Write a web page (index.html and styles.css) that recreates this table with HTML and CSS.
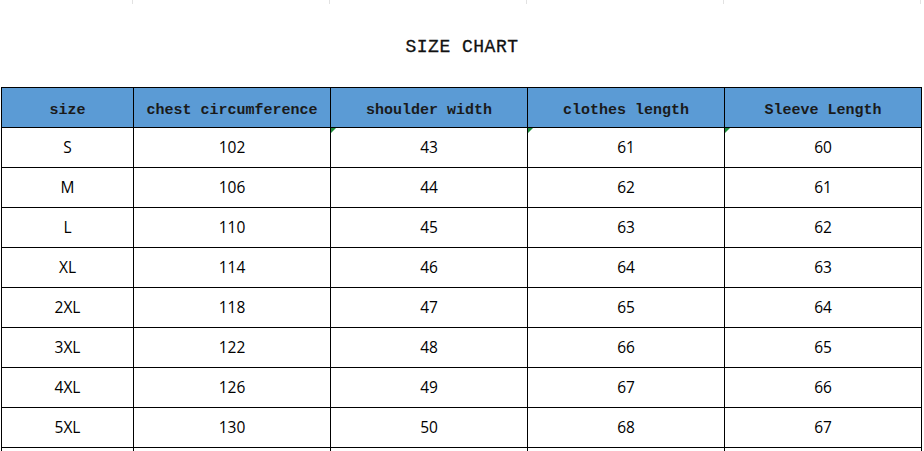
FILE: index.html
```html
<!DOCTYPE html>
<html lang="en">
<head>
<meta charset="utf-8">
<title>Size Chart</title>
<link rel="stylesheet" href="styles.css">
</head>
<body>
<div class="ticks"><span></span><span></span><span></span><span></span><span></span></div>
<h1 class="title">SIZE CHART</h1>
<table class="chart">
  <colgroup>
    <col class="c1"><col class="c2"><col class="c2"><col class="c2"><col class="c2">
  </colgroup>
  <thead>
    <tr><th>size</th><th>chest circumference</th><th>shoulder width</th><th>clothes length</th><th>Sleeve Length</th></tr>
  </thead>
  <tbody>
    <tr><td>S</td><td>102</td><td class="flag">43</td><td class="flag">61</td><td class="flag">60</td></tr>
    <tr><td>M</td><td>106</td><td>44</td><td>62</td><td>61</td></tr>
    <tr><td>L</td><td>110</td><td>45</td><td>63</td><td>62</td></tr>
    <tr><td>XL</td><td>114</td><td>46</td><td>64</td><td>63</td></tr>
    <tr><td>2XL</td><td>118</td><td>47</td><td>65</td><td>64</td></tr>
    <tr><td>3XL</td><td>122</td><td>48</td><td>66</td><td>65</td></tr>
    <tr><td>4XL</td><td>126</td><td>49</td><td>67</td><td>66</td></tr>
    <tr><td>5XL</td><td>130</td><td>50</td><td>68</td><td>67</td></tr>
    <tr><td></td><td></td><td></td><td></td><td></td></tr>
  </tbody>
</table>
</body>
</html>
```
FILE: styles.css
```css
html { overflow: hidden; background: #fff; }
body {
  margin: 0;
  width: 924px;
  font-family: "Open Sans", "Noto Sans", sans-serif;
  color: #000;
}
.ticks {
  display: grid;
  grid-template-columns: 133px 197px 197px 197px 197px;
  height: 4px;
}
.ticks span { border-right: 1px solid #e2e2e2; }
.title {
  margin: 0;
  height: 83px;
  box-sizing: border-box;
  padding-top: 33px;
  text-align: center;
  font-family: "Liberation Mono", "DejaVu Sans Mono", monospace;
  font-weight: normal;
  font-size: 18px;
  line-height: 20px;
  color: #111;
  letter-spacing: 0.5px;
  -webkit-text-stroke: 0.3px #111;
}
.chart {
  margin-left: 1px;
  border-collapse: collapse;
  table-layout: fixed;
  width: 921px;
}
.chart .c1 { width: 132px; }
.chart .c2 { width: 197px; }
.chart th, .chart td {
  border: 1px solid #000;
  padding: 0;
  text-align: center;
  vertical-align: middle;
}
.chart th {
  background: #5b9bd5;
  font-family: "Liberation Mono", "DejaVu Sans Mono", monospace;
  font-weight: bold;
  font-size: 15px;
  color: #1a1a1a;
  padding-top: 5px;
  height: 34px;
}
.chart td {
  font-size: 15.5px;
  height: 37px;
  padding-bottom: 2px;
  position: relative;
}
.chart td.flag::before {
  content: "";
  position: absolute;
  left: 0;
  top: 0;
  width: 0;
  height: 0;
  border-top: 5px solid #1e8c3a;
  border-right: 5px solid transparent;
}
```
